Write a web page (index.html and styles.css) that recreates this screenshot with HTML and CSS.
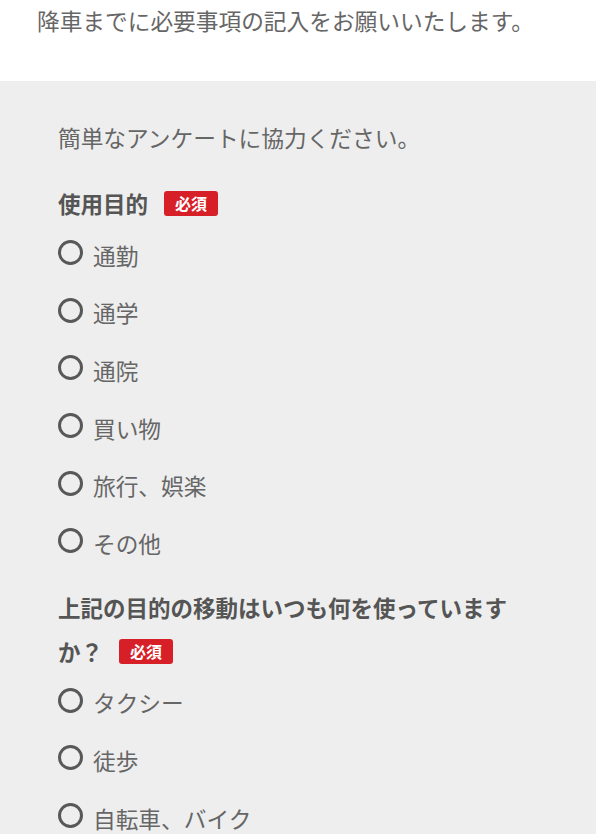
FILE: index.html
```html
<!DOCTYPE html>
<html lang="ja">
<head>
<meta charset="utf-8">
<link rel="stylesheet" href="styles.css">
</head>
<body>
<header class="notice">降車までに必要事項の記入をお願いいたします。</header>
<main class="survey">
  <p class="intro">簡単なアンケートに協力ください。</p>
  <section class="question q1">
    <h2 class="q-title">使用目的<span class="badge">必須</span></h2>
    <ul class="options">
      <li class="option"><span class="radio"></span><span class="label">通勤</span></li>
      <li class="option"><span class="radio"></span><span class="label">通学</span></li>
      <li class="option"><span class="radio"></span><span class="label">通院</span></li>
      <li class="option"><span class="radio"></span><span class="label">買い物</span></li>
      <li class="option"><span class="radio"></span><span class="label">旅行、娯楽</span></li>
      <li class="option"><span class="radio"></span><span class="label">その他</span></li>
    </ul>
  </section>
  <section class="question q2">
    <h2 class="q-title">上記の目的の移動はいつも何を使っていますか？<span class="badge">必須</span></h2>
    <ul class="options">
      <li class="option"><span class="radio"></span><span class="label">タクシー</span></li>
      <li class="option"><span class="radio"></span><span class="label">徒歩</span></li>
      <li class="option"><span class="radio"></span><span class="label">自転車、バイク</span></li>
    </ul>
  </section>
</main>
</body>
</html>
```
FILE: styles.css
```css
html, body {
  margin: 0;
  padding: 0;
  background: #eeeeee;
}
body {
  font-family: "Noto Sans CJK JP", "Noto Sans", sans-serif;
  color: #666;
  overflow: hidden;
}
.notice {
  background: #fff;
  height: 81px;
  box-sizing: border-box;
  padding: 5px 0 0 37px;
  font-size: 22.7px;
  line-height: 32px;
  color: #666;
}
.survey {
  padding: 35px 58px 0 58px;
}
.intro {
  margin: 0;
  font-size: 22.7px;
  line-height: 44px;
  color: #666;
}
.question {
  margin: 0;
}
.q1 {
  margin-top: 21px;
}
.q2 {
  margin-top: 12px;
}
.q-title {
  margin: 0;
  font-size: 22.5px;
  line-height: 44px;
  font-weight: 700;
  color: #555;
}
.badge {
  display: inline-block;
  vertical-align: 3px;
  margin-left: 16px;
  background: #d71f27;
  color: #fff;
  font-size: 16px;
  line-height: 25px;
  font-weight: 700;
  padding: 0 11px;
  border-radius: 3px;
}
.q1 .options {
  margin-top: 2px;
}
.q2 .options {
  margin-top: 2px;
}
.options {
  list-style: none;
  margin: 0;
  padding: 0;
}
.option {
  display: flex;
  align-items: center;
  height: 57.6px;
}
.radio {
  width: 25px;
  height: 25px;
  box-sizing: border-box;
  border: 3px solid #585858;
  border-radius: 50%;
  margin-top: -6px;
  margin-right: 10px;
  flex: none;
}
.label {
  font-size: 22.7px;
  line-height: 30px;
  color: #666;
}
```
